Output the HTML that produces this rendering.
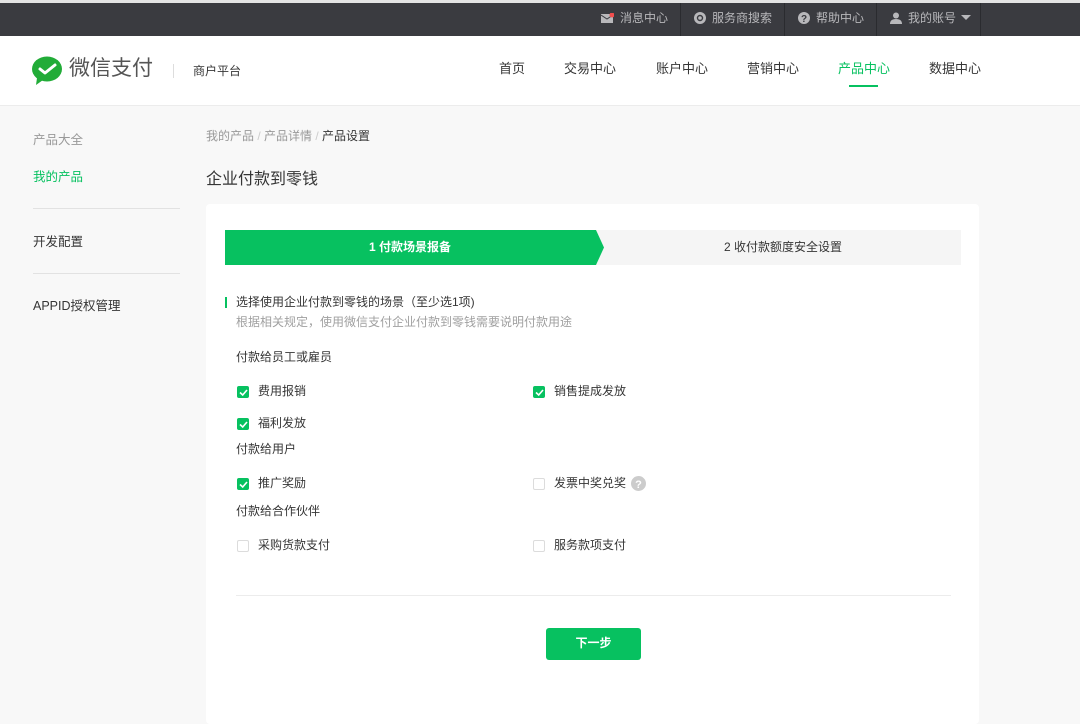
<!DOCTYPE html>
<html><head><meta charset="utf-8"><style>
*{margin:0;padding:0;box-sizing:border-box}
body{width:1080px;height:709px;overflow:hidden;background:#f8f8f8;font-family:"Liberation Sans","Noto Sans CJK SC",sans-serif;font-size:12px;color:#353535;position:relative}
.abs{position:absolute;white-space:nowrap}
.top{position:absolute;left:0;top:0;width:1080px;height:36px;background:#3a3b40;border-top:3px solid #e4e4e4}
.top .it{position:absolute;top:0;height:33px;line-height:31px;color:#b8b8bb;font-size:12px;border-left:1px solid #2a2b2f}
.top svg{margin-right:6px}
.hdr{position:absolute;left:0;top:36px;width:1080px;height:70px;background:#fff;border-bottom:1px solid #ececec}
.nav{position:absolute;top:22px;font-size:13px;color:#353535}
.card{position:absolute;left:206px;top:204px;width:773px;height:520px;background:#fff;border-radius:4px}
.cb{position:absolute;width:12px;height:12px;border-radius:2px}
.on{background:#07c160}
.off{border:1px solid #dcdcdc;background:#fff}
.on svg{position:absolute;left:2px;top:2px}
</style></head><body>
<div class="top">
 <div class="it" style="left:580px;width:101px;border-left:none;padding-left:21px"><svg width="13" height="10" style="vertical-align:-1px"><rect x="0" y="1" width="12" height="9" fill="#b8b8bb"/><path d="M0 2 L6 6 L12 2" stroke="#3a3b40" fill="none"/><circle cx="11" cy="2" r="2.5" fill="#f24d4d"/></svg>消息中心</div>
 <div class="it" style="left:680px;width:105px;padding-left:13px"><svg width="12" height="12" style="vertical-align:-2px"><circle cx="6" cy="6" r="6" fill="#b8b8bb"/><circle cx="6" cy="6" r="2.5" fill="none" stroke="#3a3b40" stroke-width="1.4"/></svg>服务商搜索</div>
 <div class="it" style="left:784px;width:93px;padding-left:13px"><svg width="12" height="12" style="vertical-align:-2px"><circle cx="6" cy="6" r="6" fill="#b8b8bb"/><text x="6" y="10" font-size="10" text-anchor="middle" fill="#3a3b40" font-weight="bold">?</text></svg>帮助中心</div>
 <div class="it" style="left:876px;width:105px;padding-left:13px;border-right:1px solid #2a2b2f"><svg width="12" height="12" style="vertical-align:-2px"><circle cx="6" cy="3.5" r="3" fill="#b8b8bb"/><path d="M0 12 Q0 7 6 7 Q12 7 12 12Z" fill="#b8b8bb"/></svg>我的账号 <svg width="10" height="6" style="vertical-align:1px;margin-left:2px"><path d="M0 0 L10 0 L5 5Z" fill="#b8b8bb"/></svg></div>
</div>
<div class="hdr">
 <svg class="abs" style="left:32px;top:20px" width="32" height="30" viewBox="0 0 32 30"><ellipse cx="15" cy="13" rx="15" ry="12.5" fill="#22ac38"/><path d="M5 22 L4 29 L11 24Z" fill="#22ac38"/><path d="M8 13 L13 17 L23 9" stroke="#fff" stroke-width="3" fill="none" stroke-linecap="round" stroke-linejoin="round"/></svg>
 <div class="abs" style="left:69px;top:20px;font-size:21px;color:#555;line-height:26px">微信支付</div>
 <div class="abs" style="left:173px;top:28px;width:1px;height:14px;background:#ddd"></div>
 <div class="abs" style="left:193px;top:26px;font-size:12px;color:#353535">商户平台</div>
 <div class="nav abs" style="left:499px">首页</div>
 <div class="nav abs" style="left:564px">交易中心</div>
 <div class="nav abs" style="left:656px">账户中心</div>
 <div class="nav abs" style="left:747px">营销中心</div>
 <div class="nav abs" style="left:838px;color:#07c160">产品中心</div>
 <div class="abs" style="left:849px;top:49px;width:29px;height:2px;background:#07c160"></div>
 <div class="nav abs" style="left:929px">数据中心</div>
</div>
<div class="abs" style="left:33px;top:129px;color:#999;font-size:12.5px">产品大全</div>
<div class="abs" style="left:33px;top:166px;color:#07c160;font-size:12.5px">我的产品</div>
<div class="abs" style="left:33px;top:208px;width:147px;height:1px;background:#e2e2e2"></div>
<div class="abs" style="left:33px;top:231px;font-size:12.5px">开发配置</div>
<div class="abs" style="left:33px;top:295px;font-size:12.5px">APPID授权管理</div>
<div class="abs" style="left:33px;top:273px;width:147px;height:1px;background:#e2e2e2"></div>
<div class="abs" style="left:206px;top:127px;color:#999">我的产品 <span style="color:#ccc">/</span> 产品详情 <span style="color:#ccc">/</span> <span style="color:#353535">产品设置</span></div>
<div class="abs" style="left:206px;top:165px;font-size:16px;color:#353535">企业付款到零钱</div>
<div class="card"></div>
<div class="abs" style="left:225px;top:230px;width:736px;height:35px;background:#f5f5f5"></div>
<svg class="abs" style="left:225px;top:230px" width="380" height="35"><path d="M0 0 H371 L379 17.5 L371 35 H0Z" fill="#07c160"/></svg>
<div class="abs" style="left:369px;top:238px;color:#fff;font-size:12px;font-weight:bold">1 付款场景报备</div>
<div class="abs" style="left:724px;top:238px;color:#353535">2 收付款额度安全设置</div>
<div class="abs" style="left:225px;top:297px;width:2px;height:11px;background:#07c160"></div>
<div class="abs" style="left:236px;top:293px">选择使用企业付款到零钱的场景（至少选1项)</div>
<div class="abs" style="left:236px;top:313px;color:#a0a0a0">根据相关规定，使用微信支付企业付款到零钱需要说明付款用途</div>
<div class="abs" style="left:236px;top:348px">付款给员工或雇员</div>
<div class="cb on" style="left:237px;top:386px"><svg width="9" height="9"><path d="M1 4.5 L3.7 7 L8 2" stroke="#fff" stroke-width="1.6" fill="none"/></svg></div><div class="abs" style="left:258px;top:382px">费用报销</div>
<div class="cb on" style="left:533px;top:386px"><svg width="9" height="9"><path d="M1 4.5 L3.7 7 L8 2" stroke="#fff" stroke-width="1.6" fill="none"/></svg></div><div class="abs" style="left:554px;top:382px">销售提成发放</div>
<div class="cb on" style="left:237px;top:418px"><svg width="9" height="9"><path d="M1 4.5 L3.7 7 L8 2" stroke="#fff" stroke-width="1.6" fill="none"/></svg></div><div class="abs" style="left:258px;top:414px">福利发放</div>
<div class="abs" style="left:236px;top:440px">付款给用户</div>
<div class="cb on" style="left:237px;top:478px"><svg width="9" height="9"><path d="M1 4.5 L3.7 7 L8 2" stroke="#fff" stroke-width="1.6" fill="none"/></svg></div><div class="abs" style="left:258px;top:474px">推广奖励</div>
<div class="cb off" style="left:533px;top:478px"></div><div class="abs" style="left:554px;top:474px">发票中奖兑奖</div>
<svg class="abs" style="left:631px;top:476px" width="15" height="15"><circle cx="7.5" cy="7.5" r="7.5" fill="#ccc"/><text x="7.5" y="12" font-size="11" font-weight="bold" text-anchor="middle" fill="#fff" font-family="Liberation Sans">?</text></svg>
<div class="abs" style="left:236px;top:502px">付款给合作伙伴</div>
<div class="cb off" style="left:237px;top:540px"></div><div class="abs" style="left:258px;top:536px">采购货款支付</div>
<div class="cb off" style="left:533px;top:540px"></div><div class="abs" style="left:554px;top:536px">服务款项支付</div>
<div class="abs" style="left:236px;top:595px;width:715px;height:1px;background:#ececec"></div>
<div class="abs" style="left:546px;top:628px;width:95px;height:32px;background:#07c160;border-radius:3px;color:#fff;text-align:center;line-height:30px;font-weight:bold">下一步</div>
</body></html>
